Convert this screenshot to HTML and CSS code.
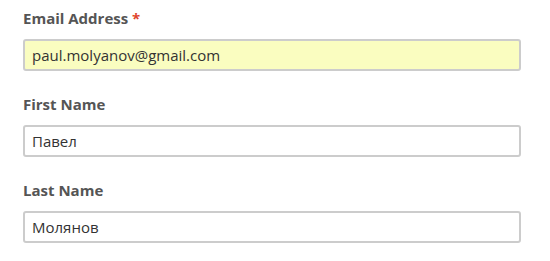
FILE: index.html
```html
<!DOCTYPE html>
<html>
<head>
<meta charset="utf-8">
<link rel="stylesheet" href="styles.css">
</head>
<body>
<form class="form">
  <div class="field">
    <label class="label">Email Address <span class="req">*</span></label>
    <div class="input input-filled">paul.molyanov@gmail.com</div>
  </div>
  <div class="field">
    <label class="label">First Name</label>
    <div class="input">Павел</div>
  </div>
  <div class="field">
    <label class="label">Last Name</label>
    <div class="input">Молянов</div>
  </div>
</form>
</body>
</html>
```
FILE: styles.css
```css
html, body {
  margin: 0;
  padding: 0;
  background: #ffffff;
}
.form {
  font-family: "Open Sans", "Noto Sans", sans-serif;
  padding: 8px 29px 0 23px;
  display: flex;
  flex-direction: column;
  gap: 23px;
}
.field {
  display: flex;
  flex-direction: column;
  gap: 11px;
}
.label {
  font-size: 15px;
  font-weight: 700;
  line-height: 20px;
  color: #555555;
}
.req {
  color: #e0452c;
  font-size: 15px;
  vertical-align: top;
}
.input {
  box-sizing: border-box;
  height: 32px;
  border: 2px solid #cccccc;
  border-radius: 3px;
  padding: 0 7px;
  font-size: 15px;
  line-height: 28px;
  color: #333333;
  background: #ffffff;
}
.input-filled {
  background: #fafdc0;
}
```
